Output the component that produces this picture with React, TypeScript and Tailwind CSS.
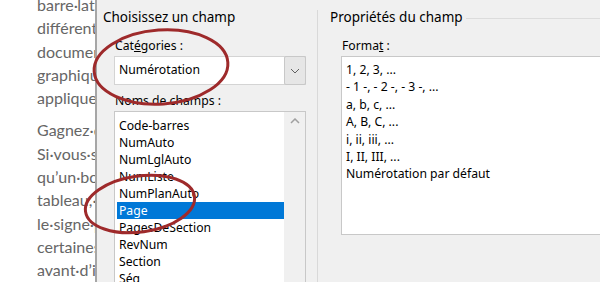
import React from "react";

const uiFont = { fontFamily: '"Noto Sans", "Open Sans", sans-serif' };

function DocText() {
  const p1 = ["barre·latérale", "différents", "document", "graphique", "appliquer"];
  const p2 = ["Gagnez·du·temps", "Si·vous·souhaitez", "qu’un·bouton", "tableau,·vous", "le·signe·plus", "certaines·zones", "avant·d’insérer"];
  return (
    <div
      className="w-[95px] shrink-0 overflow-hidden bg-white pl-[37px] text-[16px] leading-[23.3px] text-[#666666]"
      style={{ fontFamily: 'Lato, "Open Sans", sans-serif' }}
    >
      <div className="-mt-[7px]">
        {p1.map((t) => (
          <div key={t} className="whitespace-nowrap">{t}</div>
        ))}
      </div>
      <div className="mt-[9px]">
        {p2.map((t) => (
          <div key={t} className="whitespace-nowrap">{t}</div>
        ))}
      </div>
    </div>
  );
}

function ChevronDown() {
  return (
    <svg width="10" height="6" viewBox="0 0 10 6" fill="none">
      <path d="M1 1 L5 5 L9 1" stroke="#606060" strokeWidth="1" />
    </svg>
  );
}

function ChevronUp() {
  return (
    <svg width="10" height="6" viewBox="0 0 10 6" fill="none">
      <path d="M1 5 L5 1 L9 5" stroke="#a0a0a0" strokeWidth="1.5" />
    </svg>
  );
}

export default function App() {
  const fields = [
    "Code-barres",
    "NumAuto",
    "NumLglAuto",
    "NumListe",
    "NumPlanAuto",
    "Page",
    "PagesDeSection",
    "RevNum",
    "Section",
    "Ség",
  ];
  const formats = [
    "1, 2, 3, ...",
    "- 1 -, - 2 -, - 3 -, ...",
    "a, b, c, ...",
    "A, B, C, ...",
    "i, ii, iii, ...",
    "I, II, III, ...",
    "Numérotation par défaut",
  ];
  return (
    <div className="flex h-[282px] w-[600px] overflow-hidden bg-white">
      <DocText />
      <div className="w-[2px] shrink-0 bg-[#a6a6a6]" />
      <div className="relative flex flex-1 overflow-hidden bg-[#f0f0f0] text-[12.2px] text-black" style={uiFont}>
        {/* left panel */}
        <div className="flex w-[220px] shrink-0 flex-col">
          <div className="mt-[8px] shrink-0 pl-[6px] text-[13.5px] leading-[19px]">Choisissez un champ</div>
          <div className="mt-[9px] shrink-0 pl-[18px] leading-[19px]">
            Cat<span className="underline">é</span>gories :
          </div>
          <div className="ml-[17px] mt-[1px] flex h-[29px] w-[192px] shrink-0 border border-[#d4d4d4] bg-white">
            <div className="flex flex-1 items-center pl-[4px]">Numérotation</div>
            <div className="-my-px -mr-px flex w-[22px] items-center justify-center rounded-[2px] border border-[#c8c8c8] bg-[#e6e6e6]">
              <ChevronDown />
            </div>
          </div>
          <div className="mt-[6px] shrink-0 pl-[18px] leading-[19px]">Noms de champs :</div>
          <div className="ml-[17px] mt-[1px] flex h-[200px] w-[192px] shrink-0 border border-[#c8c8c8] bg-white">
            <div className="flex flex-1 flex-col pt-[5px]">
              {fields.map((f) => (
                <div
                  key={f}
                  className={
                    "h-[17px] shrink-0 leading-[17px] " +
                    (f === "Page" ? "ml-[2px] bg-[#0078d7] pl-[2px] text-white" : "pl-[4px]")
                  }
                >
                  {f}
                </div>
              ))}
            </div>
            <div className="flex w-[21px] flex-col bg-[#f0f0f0]">
              <div className="flex h-[18px] items-center justify-center">
                <ChevronUp />
              </div>
            </div>
          </div>
        </div>
        {/* right panel */}
        <div className="mt-[10px] flex flex-1 flex-col border-l border-[#d9d9d9]">
          <div className="flex shrink-0 items-center">
            <div className="-mt-[2px] pl-[12px] pr-[3px] text-[13.5px] leading-[19px]">Propriétés du champ</div>
            <div className="h-px flex-1 bg-[#dcdcdc]" />
          </div>
          <div className="mt-[9px] shrink-0 pl-[24px] leading-[19px]">
            Forma<span className="underline">t</span> :
          </div>
          <div className="ml-[23px] mt-[1px] h-[179px] shrink-0 border border-r-0 border-[#c8c8c8] bg-white pl-[4px] pt-[4px]">
            {formats.map((f) => (
              <div key={f} className="h-[17.4px] whitespace-nowrap leading-[17.4px]">
                {f}
              </div>
            ))}
          </div>
        </div>
      </div>
      {/* red annotation ellipses */}
      <svg className="pointer-events-none absolute left-0 top-0" width="600" height="282" viewBox="0 0 600 282">
        <ellipse cx="161" cy="67" rx="67" ry="37" fill="none" stroke="#9e2a2b" strokeWidth="3" transform="rotate(-4 161 67)" />
        <ellipse cx="140" cy="204" rx="55" ry="28" fill="none" stroke="#9e2a2b" strokeWidth="3" transform="rotate(-8 140 204)" />
      </svg>
    </div>
  );
}
